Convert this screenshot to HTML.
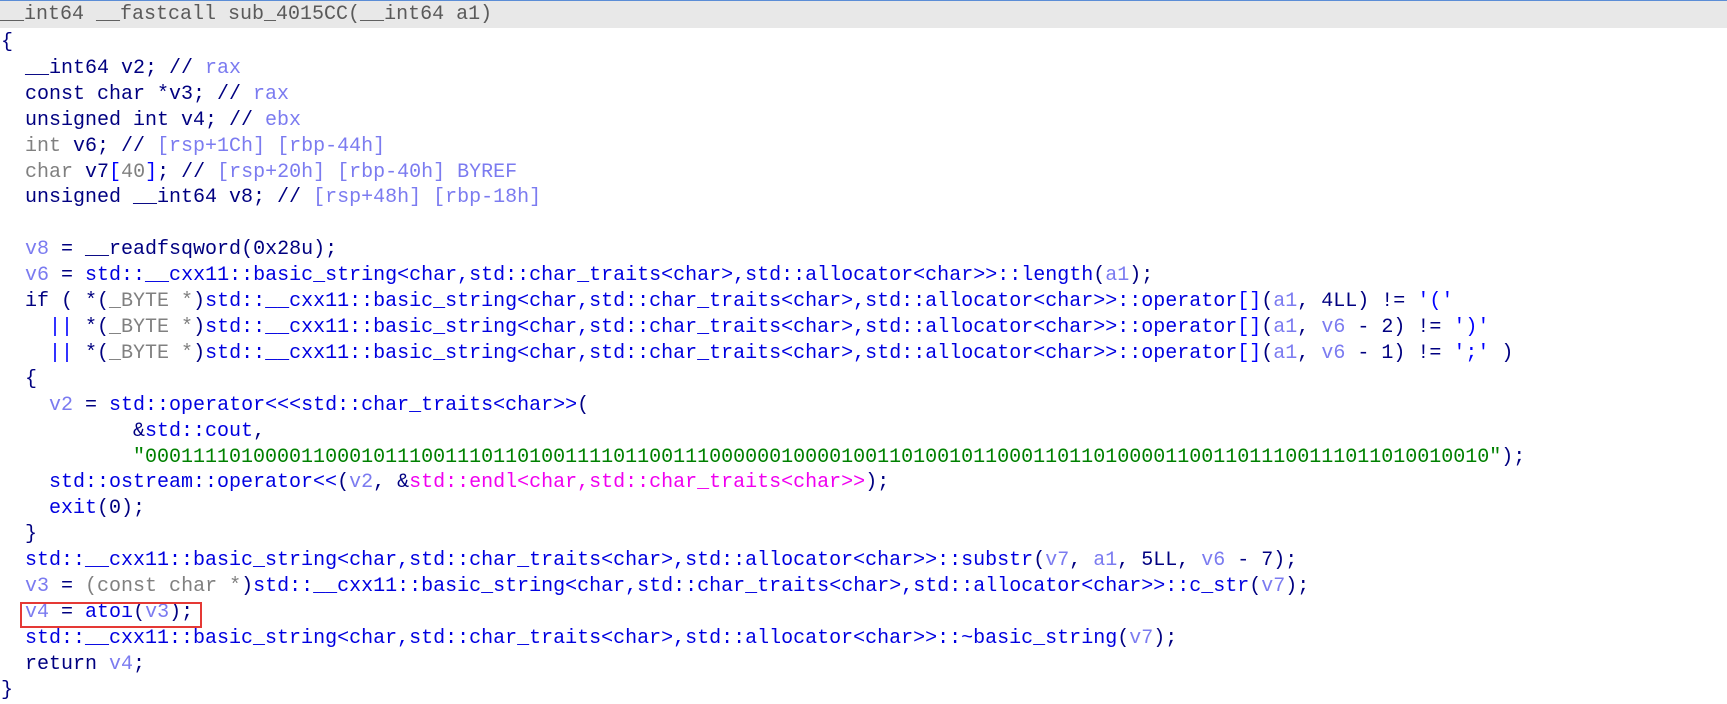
<!DOCTYPE html>
<html><head><meta charset="utf-8"><style>
html,body{margin:0;padding:0;background:#fff;width:1727px;height:702px;overflow:hidden}
.hdr{position:absolute;left:0;top:0;width:1727px;height:28px;background:#e8e8e8;border-top:1px solid #5b8dd6;box-sizing:border-box}
pre{margin:0;position:absolute;left:1px;font-family:"Liberation Mono",monospace;font-size:20px;line-height:25.9px;color:#000080;white-space:pre}
.h{top:2px;color:#5a5a5a;left:0}
.b{top:30px}
.v{color:#7b7bf0}.g{color:#808080}.f{color:#0000e0}.s{color:#008000}.m{color:#f000f0}.p{color:#0000ff}
.box{position:absolute;left:20px;top:602px;width:182px;height:26px;border:2px solid #e53935;box-sizing:border-box}
</style></head><body>
<div class="hdr"></div>
<pre class="h">__int64 __fastcall sub_4015CC(__int64 a1)</pre>
<pre class="b">{
  __int64 v2; // <span class="v">rax</span>
  const char *v3; // <span class="v">rax</span>
  unsigned int v4; // <span class="v">ebx</span>
  <span class="g">int</span> v6; // <span class="v">[rsp+1Ch] [rbp-44h]</span>
  <span class="g">char</span> v7<span class="p">[</span><span class="g">40</span><span class="p">]</span>; // <span class="v">[rsp+20h] [rbp-40h] BYREF</span>
  unsigned __int64 v8; // <span class="v">[rsp+48h] [rbp-18h]</span>

  <span class="v">v8</span> = __readfsqword(0x28u);
  <span class="v">v6</span> = <span class="f">std::__cxx11::basic_string&lt;char,std::char_traits&lt;char&gt;,std::allocator&lt;char&gt;&gt;::length</span>(<span class="v">a1</span>);
  if ( *(<span class="g">_BYTE *</span>)<span class="f">std::__cxx11::basic_string&lt;char,std::char_traits&lt;char&gt;,std::allocator&lt;char&gt;&gt;::operator</span><span class="p">[]</span>(<span class="v">a1</span>, 4LL) != <span class="p">'('</span>
    <span class="p">||</span> *(<span class="g">_BYTE *</span>)<span class="f">std::__cxx11::basic_string&lt;char,std::char_traits&lt;char&gt;,std::allocator&lt;char&gt;&gt;::operator</span><span class="p">[]</span>(<span class="v">a1</span>, <span class="v">v6</span> - 2) != <span class="p">')'</span>
    <span class="p">||</span> *(<span class="g">_BYTE *</span>)<span class="f">std::__cxx11::basic_string&lt;char,std::char_traits&lt;char&gt;,std::allocator&lt;char&gt;&gt;::operator</span><span class="p">[]</span>(<span class="v">a1</span>, <span class="v">v6</span> - 1) != <span class="p">';'</span> )
  {
    <span class="v">v2</span> = <span class="f">std::operator&lt;&lt;&lt;std::char_traits&lt;char&gt;&gt;</span>(
           &amp;<span class="f">std::cout</span>,
           <span class="s">"0001111010000110001011100111011010011110110011100000010000100110100101100011011010000110011011100111011010010010"</span>);
    <span class="f">std::ostream::operator&lt;&lt;</span>(<span class="v">v2</span>, &amp;<span class="m">std::endl&lt;char,std::char_traits&lt;char&gt;&gt;</span>);
    <span class="f">exit</span>(0);
  }
  <span class="f">std::__cxx11::basic_string&lt;char,std::char_traits&lt;char&gt;,std::allocator&lt;char&gt;&gt;::substr</span>(<span class="v">v7</span>, <span class="v">a1</span>, 5LL, <span class="v">v6</span> - 7);
  <span class="v">v3</span> = <span class="g">(const char *</span>)<span class="f">std::__cxx11::basic_string&lt;char,std::char_traits&lt;char&gt;,std::allocator&lt;char&gt;&gt;::c_str</span>(<span class="v">v7</span>);
  <span class="v">v4</span> = <span class="f">atoi</span>(<span class="v">v3</span>);
  <span class="f">std::__cxx11::basic_string&lt;char,std::char_traits&lt;char&gt;,std::allocator&lt;char&gt;&gt;::~basic_string</span>(<span class="v">v7</span>);
  return <span class="v">v4</span>;
}</pre>
<div class="box"></div>
</body></html>
